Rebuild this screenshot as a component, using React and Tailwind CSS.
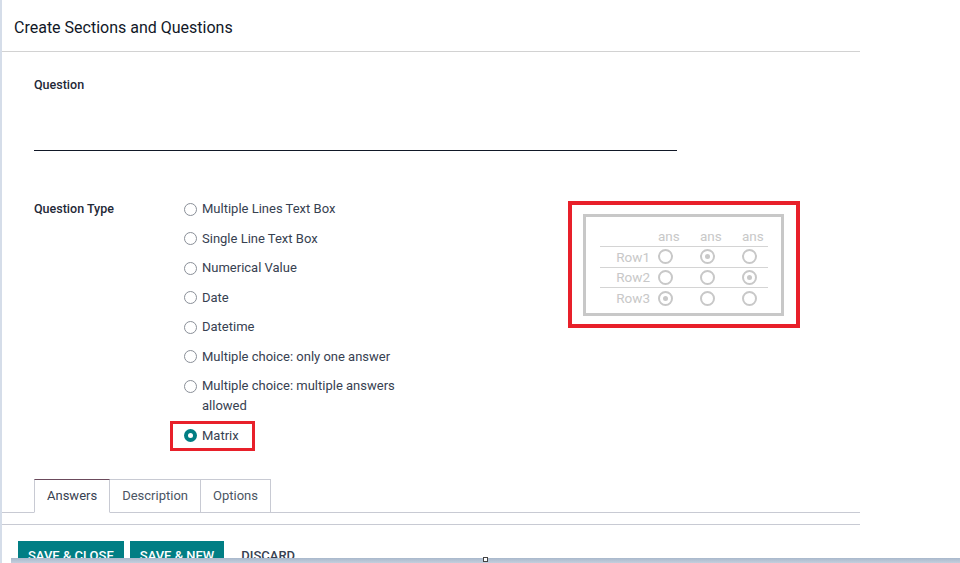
import React from "react";

function Radio({ checked }) {
  if (checked) {
    return (
      <span className="flex w-[13px] h-[13px] rounded-full bg-[#017e84] items-center justify-center shrink-0">
        <span className="w-[5px] h-[5px] rounded-full bg-white" />
      </span>
    );
  }
  return <span className="block w-[13px] h-[13px] rounded-full border border-[#8a8f98] bg-white shrink-0" />;
}

function MiniRadio({ checked }) {
  return (
    <span className="flex w-[15px] h-[15px] rounded-full border-2 border-[#c8c8c8] items-center justify-center">
      {checked && <span className="w-[5px] h-[5px] rounded-full bg-[#c8c8c8]" />}
    </span>
  );
}

const options = [
  "Multiple Lines Text Box",
  "Single Line Text Box",
  "Numerical Value",
  "Date",
  "Datetime",
  "Multiple choice: only one answer",
  "Multiple choice: multiple answers allowed",
];

const rows = [
  ["Row1", [false, true, false]],
  ["Row2", [false, false, true]],
  ["Row3", [true, false, false]],
];

export default function App() {
  return (
    <div
      className="w-[960px] h-[563px] relative overflow-hidden bg-white flex"
      style={{ fontFamily: "Roboto, 'Noto Sans', sans-serif" }}
    >
      <div className="w-[2px] h-full bg-[#d5dde9] shrink-0" />
      <div className="w-[858px] flex flex-col shrink-0">
        <div className="h-[52px] shrink-0 border-b border-[#d2d2d2] flex items-center pl-[12px] pt-[4px]">
          <span className="text-[16px] text-[#111827] font-normal leading-none">Create Sections and Questions</span>
        </div>

        <div className="pl-[32px] pt-[23px] shrink-0">
          <div className="text-[12.5px] leading-[20px] font-medium text-[#1f2937]">Question</div>
          <div className="w-[643px] h-[56px] border-b border-[#111827]" />

          <div className="flex mt-[48px]">
            <div className="w-[150px] text-[12.5px] leading-[20px] font-medium text-[#1f2937]">Question Type</div>
            <div className="w-[222px] flex flex-col gap-[9.5px]">
              {options.map((o) => (
                <div key={o} className="flex items-start gap-[5px] text-[13px] leading-[20px] text-[#374151]">
                  <span className="block pt-[3.5px]">
                    <Radio />
                  </span>
                  <span>{o}</span>
                </div>
              ))}
              <div className="relative flex items-start gap-[5px] text-[13px] leading-[20px] text-[#374151]">
                <span className="block pt-[3.5px]">
                  <Radio checked />
                </span>
                <span>Matrix</span>
                <div className="absolute -left-[14px] -top-[5px] -bottom-[5px] w-[85px] border-[3px] border-[#e8202a]" />
              </div>
            </div>
            <div className="ml-[162px] mt-[2px] w-[232px] h-[127px] border-[4px] border-[#e8202a] pt-[9px] pl-[11px]">
              <div className="w-[201px] h-[102px] border-[3px] border-[#c8c8c8] pl-[14px] pt-[9px]">
                <div className="w-[168px] text-[13.5px] text-[#c8c8c8]">
                  <div className="flex h-[21px] items-center border-b border-[#d4d4d4]">
                    <div className="w-[58px]" />
                    <div className="w-[42px]">ans</div>
                    <div className="w-[42px]">ans</div>
                    <div className="w-[26px]">ans</div>
                  </div>
                  {rows.map(([label, vals], i) => (
                    <div
                      key={label}
                      className={
                        "flex h-[20.5px] items-center" + (i < 2 ? " border-b border-[#d4d4d4]" : "")
                      }
                    >
                      <div className="w-[58px] text-right pr-[8px]">{label}</div>
                      {vals.map((v, j) => (
                        <div key={j} className={j === 2 ? "w-[26px] flex" : "w-[42px] flex"}>
                          <MiniRadio checked={v} />
                        </div>
                      ))}
                    </div>
                  ))}
                </div>
              </div>
            </div>
          </div>
        </div>

        <div className="mt-[33px] shrink-0 border-b border-[#c8cad3] pl-[32px] flex h-[34px]">
          <div className="px-[12px] border border-[#c8cad3] border-t-[#6b4a5c] border-b-white -mb-[1px] bg-white flex items-center text-[13px] text-[#374151]">
            Answers
          </div>
          <div className="px-[12px] border-t border-r border-[#c8cad3] flex items-center text-[13px] text-[#4b5563]">
            Description
          </div>
          <div className="px-[12px] border-t border-r border-[#c8cad3] flex items-center text-[13px] text-[#4b5563]">
            Options
          </div>
        </div>

        <div className="mt-[11px] shrink-0 border-t border-[#c8cad3] pl-[16px] pt-[16px] flex gap-[6px] items-start">
          <div className="h-[30px] px-[10px] bg-[#017e84] text-white text-[13px] font-medium flex items-center">
            SAVE &amp; CLOSE
          </div>
          <div className="h-[30px] px-[10px] bg-[#017e84] text-white text-[13px] font-medium flex items-center">
            SAVE &amp; NEW
          </div>
          <div className="h-[30px] px-[11px] text-[#374151] text-[13px] font-medium flex items-center">
            DISCARD
          </div>
        </div>
      </div>

      <div className="absolute left-[11px] right-0 bottom-0 h-[5px] bg-gradient-to-b from-[#a9b8cc] to-[#c4cfdd]" />
      <div className="absolute left-[483px] bottom-[1px] w-[5px] h-[5px] bg-white border border-[#444]" />
    </div>
  );
}
